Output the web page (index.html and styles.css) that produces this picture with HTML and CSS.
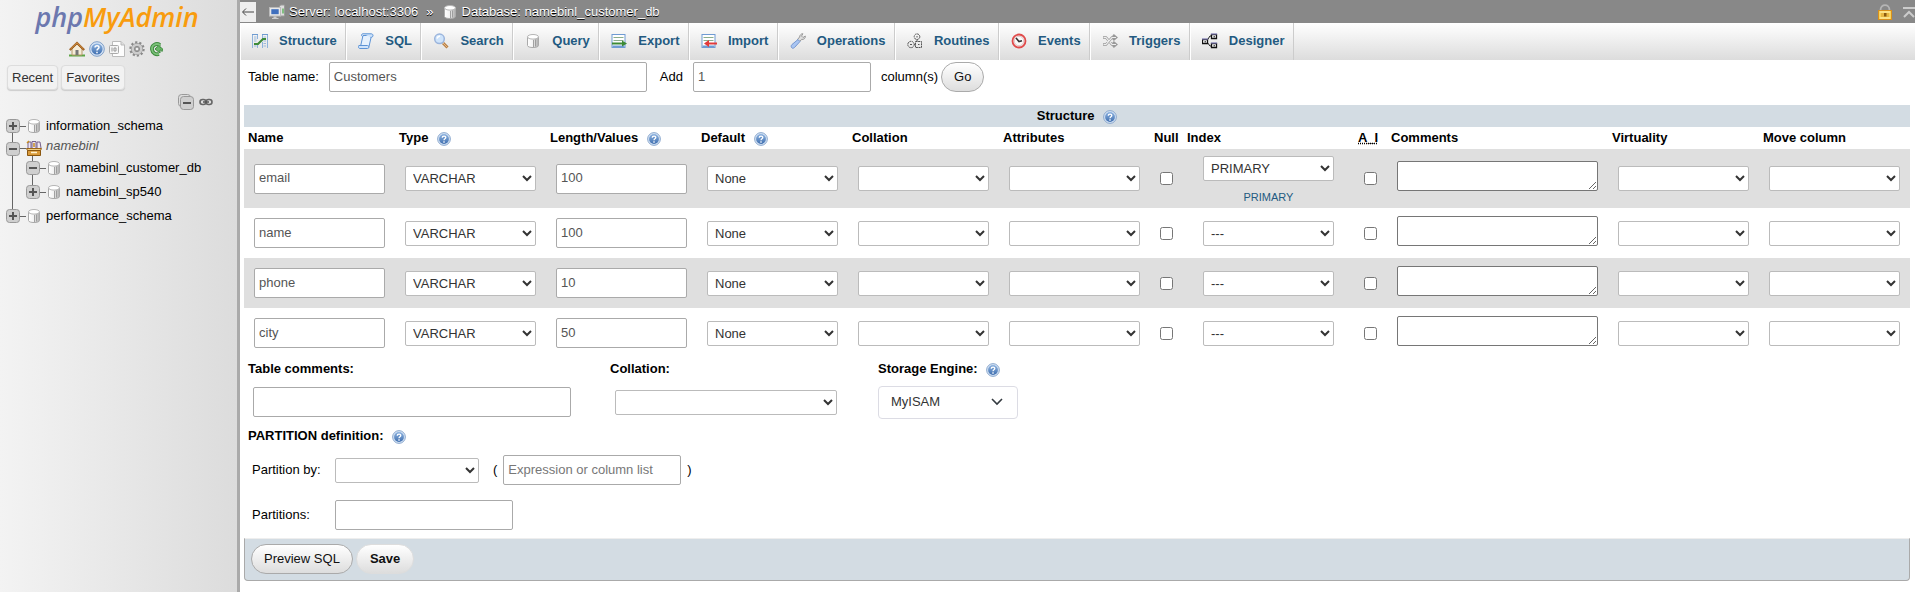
FILE: index.html
```html
<!DOCTYPE html>
<html lang="en">
<head>
<meta charset="utf-8">
<title>phpMyAdmin</title>
<link rel="stylesheet" href="styles.css">
</head>
<body>
<svg class="sprite" aria-hidden="true">
  <defs>
    <linearGradient id="gHelp" x1="0" y1="0" x2="0" y2="1"><stop offset="0" stop-color="#8fb4e0"/><stop offset="1" stop-color="#3f6fb0"/></linearGradient>
    <linearGradient id="gDb" x1="0" y1="0" x2="1" y2="0"><stop offset="0" stop-color="#fff"/><stop offset=".45" stop-color="#f4f4f4"/><stop offset="1" stop-color="#aaa"/></linearGradient>
  </defs>
  <symbol id="help" viewBox="0 0 16 16"><circle cx="8" cy="8" r="7.300" fill="#d6e4f5" stroke="#7f9fc8"/><circle cx="8" cy="8" r="5.600" fill="url(#gHelp)"/><path d="M6 6.600C6 4 10.200 4 10 6.500 9.900 7.900 8 7.800 8 9.500M8 10.700v1.500" fill="none" stroke="#fff" stroke-width="1.500"/></symbol>
  <symbol id="db" viewBox="0 0 16 16"><path d="M2.500 4v8.500c0 2.700 11 2.700 11 0V4" fill="url(#gDb)" stroke="#aaa"/><ellipse cx="8" cy="3.800" rx="5.500" ry="2.300" fill="#fff" stroke="#b5b5b5"/><path d="M10.500 6.500v7M8.500 7v7" stroke="#999" stroke-width=".9"/></symbol>
  <symbol id="plus" viewBox="0 0 14 14"><rect x=".5" y=".5" width="13" height="13" rx="3" fill="#cfcfcf" stroke="#999"/><path d="M3 7h8M7 3v8" stroke="#555" stroke-width="2"/></symbol>
  <symbol id="minus" viewBox="0 0 14 14"><rect x=".5" y=".5" width="13" height="13" rx="3" fill="#cfcfcf" stroke="#999"/><path d="M3 7h8" stroke="#555" stroke-width="2"/></symbol>
  <symbol id="home" viewBox="0 0 16 16"><path d="M0 14.500h16" stroke="#5da545" stroke-width="2"/><path d="M3 8l5-5 5 5v6H3z" fill="#f5ecd8" stroke="#b59a6a"/><path d="M6.500 9h3v5h-3z" fill="#777"/><path d="M.8 9L8 2l7.200 7" fill="none" stroke="#9b5a1c" stroke-width="2.200"/><path d="M1.500 8L8 1.800 14.500 8" fill="none" stroke="#e2a352" stroke-width=".8"/></symbol>
  <symbol id="doc" viewBox="0 0 16 16"><path d="M3.500.5h8.500l3.500 3.500v11.500h-12z" fill="#fdfdfd" stroke="#bbb"/><path d="M12 .5V4h3.500" fill="#ddd" stroke="#bbb"/><rect x=".5" y="4.500" width="9" height="8" rx="1" fill="#f5f5f5" stroke="#aaa"/><path d="M3 6.500v4M5 7h2v3H5z" fill="none" stroke="#999"/></symbol>
  <symbol id="gear" viewBox="0 0 16 16"><circle cx="8" cy="8" r="6.600" fill="none" stroke="#8a8a8a" stroke-width="2.200" stroke-dasharray="2.200 1.950"/><circle cx="8" cy="8" r="4" fill="none" stroke="#8a8a8a" stroke-width="4"/><circle cx="8" cy="8" r="4.200" fill="none" stroke="#ccc" stroke-width="2.600"/><circle cx="8" cy="8" r="2" fill="#eee" stroke="#888"/></symbol>
  <symbol id="reload" viewBox="0 0 16 16"><path d="M11 4C7 1.500 2.500 4.500 3 8.500c.5 4 4 5.300 7 4.500" fill="none" stroke="#3f8c3f" stroke-width="3.800"/><path d="M6 8l5-4.500V6.500c2.500 0 3 2 2 4 -.5-1.200-1-1.500-2-1.500v3z" fill="#6ab868" stroke="#3f8c3f"/><path d="M11 4C7 1.500 2.500 4.500 3 8.500c.5 4 4 5.300 7 4.500" fill="none" stroke="#7cc27a" stroke-width="1.800"/></symbol>
  <symbol id="collapse" viewBox="0 0 16 16"><rect x=".5" y=".5" width="12" height="12" rx="3" fill="#ddd" stroke="#999"/><rect x="2.500" y="2.500" width="13" height="13" rx="3" fill="#cfcfcf" stroke="#999"/><path d="M5 9h8" stroke="#555" stroke-width="2"/></symbol>
  <symbol id="chain" viewBox="0 0 14 8"><rect x="1" y="1.500" width="6" height="5" rx="2.500" fill="none" stroke="#666" stroke-width="1.600"/><rect x="7" y="1.500" width="6" height="5" rx="2.500" fill="none" stroke="#666" stroke-width="1.600"/><path d="M4 4h6" stroke="#555" stroke-width="1.500"/></symbol>
  <symbol id="group" viewBox="0 0 16 16"><path d="M2 8V2h3v6M6 8V1.500h4V8M11 8V2h3l1 6" fill="#efe6f2" stroke="#76618a"/><path d="M1 3l2-2M8 3v4" stroke="#c78f21" stroke-width="1.500"/><path d="M.5 8.500h15l-1 2h-13z" fill="#f0cf86" stroke="#9a6518"/><path d="M1.500 10.500h13v5h-13z" fill="#d99a3a" stroke="#8b5710"/><path d="M5 12.500h6" stroke="#fff1cf" stroke-width="1.500"/></symbol>
  <symbol id="server" viewBox="0 0 16 16"><path d="M10.500 2.500l1-1.500h4v11h-5z" fill="#ddd" stroke="#999"/><path d="M14 4.500v5" stroke="#4a4" stroke-width="1.200"/><rect x=".5" y="3.500" width="11" height="8.500" fill="#e8e8e8" stroke="#bbb"/><rect x="2.300" y="5.200" width="7.400" height="5" fill="#3f6fbd"/><path d="M4.500 12.500h3v1.500h2v1H3v-1h1.500z" fill="#ccc"/></symbol>
  <symbol id="structure" viewBox="0 0 16 16"><path d="M.5 1v14M5.500 1v5M10.500 1v5M15.500 1v14M5.500 11v4M10.500 9v6" stroke="#8fb3dc"/><path d="M0 1.500h6M10 1.500h6" stroke="#6e9bd0"/><path d="M2 4h2.500M2 6h2.500M2 8h2.500M2 13h2.500M11.500 4H14M11.500 8H14M11.500 10.500H14M11.500 13H14" stroke="#9cb9da"/><path d="M2 11h4l5-5h3" fill="none" stroke="#3e8b3a" stroke-width="2.200"/></symbol>
  <symbol id="sql" viewBox="0 0 16 16"><path d="M5 2.500h8.500L11 13.500H2.500z" fill="#e6f1fd" stroke="#5c93d6"/><path d="M5 .8h8c3 0 2.500 4-.5 3.500M5 .8C3 .8 3 3.500 5 3.500M1 12.500h8.500c2 0 2 3 0 3H2c-2 0-2-3-1-3z" fill="#cfe3fa" stroke="#5c93d6"/></symbol>
  <symbol id="search" viewBox="0 0 16 16"><path d="M10 10l4.500 4.500" stroke="#b98045" stroke-width="3"/><path d="M9.500 9.500l5 5" stroke="#e5b98a"/><circle cx="6.500" cy="5.800" r="4.800" fill="#cfe4fb" stroke="#9ab4dc" stroke-width="1.500"/><path d="M4 5.500Q4.500 3.500 7 3" fill="none" stroke="#fff" stroke-width="1.500"/></symbol>
  <symbol id="export" viewBox="0 0 16 16"><rect x="1" y="1.500" width="13" height="13" fill="#fff" stroke="#6f9bd3"/><path d="M2.500 4.500h10M2.500 7.500h10" stroke="#8cae8c"/><path d="M1.500 13.500h12" stroke="#6f9bd3" stroke-width="2"/><path d="M1 10.500h11" stroke="#3d8a36" stroke-width="2"/><path d="M11 7.500l5 3-5 3z" fill="#3d8a36"/></symbol>
  <symbol id="import" viewBox="0 0 16 16"><rect x="1" y="1.500" width="13" height="13" fill="#fff" stroke="#6f9bd3"/><path d="M2.500 4.500h10M2.500 7.500h10" stroke="#8cae8c"/><path d="M1.500 13.500h12" stroke="#6f9bd3" stroke-width="2"/><path d="M6 10.500h10" stroke="#e23b3b" stroke-width="2"/><path d="M8 7l-5 3.500L8 14z" fill="#e23b3b"/></symbol>
  <symbol id="ops" viewBox="0 0 16 16"><path d="M10 2.500C11 1 12 .5 13 .8L11.500 3l1.500 1.500L15.300 3c.4 2-1.300 3.800-3.500 3.400L9.500 8.500l-2-2L9.600 4z" fill="#ddd" stroke="#999"/><path d="M8 6.500l2 2-5.500 6c-1 1-2.500 1-3 0s-.5-2 .5-3z" fill="#a9c5f2" stroke="#7697cf"/></symbol>
  <symbol id="routines" viewBox="0 0 16 16" fill="none" stroke="#555"><circle cx="10" cy="3.700" r="2.800" stroke-dasharray="2 .6"/><circle cx="4" cy="11.500" r="3.200" stroke-dasharray="2 .6"/><rect x="8.500" y="8.500" width="6" height="6" stroke-dasharray="2 .6"/><path d="M10 3v1.500M3 11.500h2M11 11.500h1.500M10 6.300v2M7.200 11.500h1.300"/></symbol>
  <symbol id="events" viewBox="0 0 16 16"><circle cx="8" cy="8" r="6.500" fill="#f3e7e7" stroke="#e04b4b" stroke-width="1.800"/><circle cx="8" cy="8" r="4.700" fill="#fafafa" stroke="#d5b8b8" stroke-width=".7"/><path d="M5 5l3 3.500 3-.8" fill="none" stroke="#333" stroke-width="1.600"/></symbol>
  <symbol id="triggers" viewBox="0 0 16 16" fill="none"><path d="M1 4.500h3l6 7h3M1 11.500h3l6-7h3M11 2l3 2.500-3 2.500M11 9l3 2.500-3 2.500" stroke="#999" stroke-width="2.600"/><path d="M1.500 4.500H4l6 7h4M1.500 11.500H4l6-7h4" stroke="#eee" stroke-width="1.200"/></symbol>
  <symbol id="designer" viewBox="0 0 16 16"><path d="M5 7.500l3-4.500h2M5 9l3 4h2" fill="none" stroke="#222"/><path d="M.5 6.500h5v4h-5zM9.500 1.500h5v4h-5zM9.500 10.500h5v4h-5z" fill="#fff" stroke="#111" stroke-width="1.300"/><path d="M0 6h6M9 1h6M9 10h6" stroke="#9a96d8"/><path d="M2.500 8.800h1.500M11.500 3.800h1.500M11.500 12.800h1.500" stroke="#111"/></symbol>
  <symbol id="lock" viewBox="0 0 16 16"><path d="M3.500 6c0-6.500 9-6.500 9 0" fill="none" stroke="#b5b5b5" stroke-width="1.800"/><rect x="1.500" y="6.500" width="13" height="9" fill="#f8d35c" stroke="#d9901b"/><path d="M3 8h10M3 14h10" stroke="#fff0b0"/><path d="M4 10h8M4 12h8" stroke="#d79a28"/><rect x="7" y="9" width="2.500" height="3.500" fill="#8a5a10"/></symbol>
  <symbol id="top" viewBox="0 0 12 12"><path d="M0 2h12" stroke="#ccc" stroke-width="2"/><path d="M1 11l5-5 5 5" fill="none" stroke="#ccc" stroke-width="2"/></symbol>
</svg>

<div class="app">
  <aside class="sidebar">
    <a class="logo" href="#"><span class="logo-php">php</span><span class="logo-admin">MyAdmin</span></a>
    <nav class="quick" aria-label="Navigation links">
      <a href="#" aria-label="Home"><svg class="icon"><use href="#home"/></svg></a>
      <a href="#" aria-label="Documentation"><svg class="icon"><use href="#help"/></svg></a>
      <a href="#" aria-label="MySQL documentation"><svg class="icon"><use href="#doc"/></svg></a>
      <a href="#" aria-label="Panel settings"><svg class="icon"><use href="#gear"/></svg></a>
      <a href="#" aria-label="Reload"><svg class="icon"><use href="#reload"/></svg></a>
    </nav>
    <div class="recent"><button type="button">Recent</button><button type="button">Favorites</button></div>
    <div class="tree-tools">
      <a href="#" aria-label="Collapse all"><svg class="icon"><use href="#collapse"/></svg></a>
      <a href="#" aria-label="Unlink from main panel"><svg class="icon-chain"><use href="#chain"/></svg></a>
    </div>
    <ul class="tree">
      <li><div class="node"><svg class="toggle"><use href="#plus"/></svg><span class="stub"></span><svg class="icon"><use href="#db"/></svg><a href="#">information_schema</a></div></li>
      <li>
        <div class="node node-group"><svg class="toggle"><use href="#minus"/></svg><span class="stub"></span><svg class="icon"><use href="#group"/></svg><a href="#">namebinl</a></div>
        <ul class="subtree">
          <li class="node"><svg class="toggle"><use href="#minus"/></svg><span class="stub"></span><svg class="icon"><use href="#db"/></svg><a href="#">namebinl_customer_db</a></li>
          <li class="node"><svg class="toggle"><use href="#plus"/></svg><span class="stub"></span><svg class="icon"><use href="#db"/></svg><a href="#">namebinl_sp540</a></li>
        </ul>
      </li>
      <li><div class="node"><svg class="toggle"><use href="#plus"/></svg><span class="stub"></span><svg class="icon"><use href="#db"/></svg><a href="#">performance_schema</a></div></li>
    </ul>
  </aside>

  <main class="main">
    <header class="crumbs">
      <button class="hide-nav" type="button" aria-label="Hide panel"><svg viewBox="0 0 14 10"><path d="M13 5H2M5 1.500L1.500 5 5 8.500" fill="none" stroke="#444"/></svg></button>
      <svg class="icon"><use href="#server"/></svg>
      <a href="#">Server: localhost:3306</a>
      <span class="sep">»</span>
      <svg class="icon"><use href="#db"/></svg>
      <a href="#">Database: namebinl_customer_db</a>
      <span class="crumb-tools"><svg class="icon"><use href="#lock"/></svg><svg class="icon-top"><use href="#top"/></svg></span>
    </header>
    <nav class="tabs" aria-label="Database">
      <div class="tab-list">
        <a href="#"><svg class="icon"><use href="#structure"/></svg>Structure</a>
        <a href="#"><svg class="icon"><use href="#sql"/></svg>SQL</a>
        <a href="#"><svg class="icon"><use href="#search"/></svg>Search</a>
        <a href="#"><svg class="icon"><use href="#db"/></svg>Query</a>
        <a href="#"><svg class="icon"><use href="#export"/></svg>Export</a>
        <a href="#"><svg class="icon"><use href="#import"/></svg>Import</a>
        <a href="#"><svg class="icon"><use href="#ops"/></svg>Operations</a>
        <a href="#"><svg class="icon"><use href="#routines"/></svg>Routines</a>
        <a href="#"><svg class="icon"><use href="#events"/></svg>Events</a>
        <a href="#"><svg class="icon"><use href="#triggers"/></svg>Triggers</a>
        <a href="#"><svg class="icon"><use href="#designer"/></svg>Designer</a>
      </div>
    </nav>

    <form class="content">
      <div class="table-head">
        <label for="tname">Table name:</label>
        <input class="field field-wide" id="tname" type="text" value="Customers">
        <label class="add" for="ncols">Add</label>
        <input class="field field-mid" id="ncols" type="text" value="1">
        <span>column(s)</span>
        <button class="btn btn-go" type="button">Go</button>
      </div>

      <table class="columns">
        <caption>Structure <svg class="icon-help"><use href="#help"/></svg></caption>
        <colgroup>
          <col class="c-std"><col class="c-std"><col class="c-std"><col class="c-std"><col class="c-std"><col class="c-std"><col class="c-check"><col class="c-index"><col class="c-check"><col class="c-comments"><col class="c-std"><col class="c-std">
        </colgroup>
        <thead>
          <tr>
            <th>Name</th>
            <th>Type <svg class="icon-help"><use href="#help"/></svg></th>
            <th>Length/Values <svg class="icon-help"><use href="#help"/></svg></th>
            <th>Default <svg class="icon-help"><use href="#help"/></svg></th>
            <th>Collation</th>
            <th>Attributes</th>
            <th>Null</th>
            <th>Index</th>
            <th><abbr title="AUTO_INCREMENT">A_I</abbr></th>
            <th>Comments</th>
            <th>Virtuality</th>
            <th>Move column</th>
          </tr>
        </thead>
        <tbody>
          <tr class="has-key">
            <td><input class="field" type="text" value="email" aria-label="Name"></td>
            <td><select aria-label="Type"><option>VARCHAR</option></select></td>
            <td><input class="field" type="text" value="100" aria-label="Length"></td>
            <td><select aria-label="Default"><option>None</option></select></td>
            <td><select aria-label="Collation"><option></option></select></td>
            <td><select aria-label="Attributes"><option></option></select></td>
            <td><input type="checkbox" aria-label="Null"></td>
            <td class="index"><select aria-label="Index"><option>PRIMARY</option></select><a class="key-link" href="#">PRIMARY</a></td>
            <td><input type="checkbox" aria-label="Auto increment"></td>
            <td class="comments"><textarea rows="1" aria-label="Comments"></textarea></td>
            <td><select aria-label="Virtuality"><option></option></select></td>
            <td><select aria-label="Move column"><option></option></select></td>
          </tr>
          <tr>
            <td><input class="field" type="text" value="name" aria-label="Name"></td>
            <td><select aria-label="Type"><option>VARCHAR</option></select></td>
            <td><input class="field" type="text" value="100" aria-label="Length"></td>
            <td><select aria-label="Default"><option>None</option></select></td>
            <td><select aria-label="Collation"><option></option></select></td>
            <td><select aria-label="Attributes"><option></option></select></td>
            <td><input type="checkbox" aria-label="Null"></td>
            <td class="index"><select aria-label="Index"><option>---</option></select></td>
            <td><input type="checkbox" aria-label="Auto increment"></td>
            <td class="comments"><textarea rows="1" aria-label="Comments"></textarea></td>
            <td><select aria-label="Virtuality"><option></option></select></td>
            <td><select aria-label="Move column"><option></option></select></td>
          </tr>
          <tr>
            <td><input class="field" type="text" value="phone" aria-label="Name"></td>
            <td><select aria-label="Type"><option>VARCHAR</option></select></td>
            <td><input class="field" type="text" value="10" aria-label="Length"></td>
            <td><select aria-label="Default"><option>None</option></select></td>
            <td><select aria-label="Collation"><option></option></select></td>
            <td><select aria-label="Attributes"><option></option></select></td>
            <td><input type="checkbox" aria-label="Null"></td>
            <td class="index"><select aria-label="Index"><option>---</option></select></td>
            <td><input type="checkbox" aria-label="Auto increment"></td>
            <td class="comments"><textarea rows="1" aria-label="Comments"></textarea></td>
            <td><select aria-label="Virtuality"><option></option></select></td>
            <td><select aria-label="Move column"><option></option></select></td>
          </tr>
          <tr>
            <td><input class="field" type="text" value="city" aria-label="Name"></td>
            <td><select aria-label="Type"><option>VARCHAR</option></select></td>
            <td><input class="field" type="text" value="50" aria-label="Length"></td>
            <td><select aria-label="Default"><option>None</option></select></td>
            <td><select aria-label="Collation"><option></option></select></td>
            <td><select aria-label="Attributes"><option></option></select></td>
            <td><input type="checkbox" aria-label="Null"></td>
            <td class="index"><select aria-label="Index"><option>---</option></select></td>
            <td><input type="checkbox" aria-label="Auto increment"></td>
            <td class="comments"><textarea rows="1" aria-label="Comments"></textarea></td>
            <td><select aria-label="Virtuality"><option></option></select></td>
            <td><select aria-label="Move column"><option></option></select></td>
          </tr>
        </tbody>
      </table>

      <div class="options">
        <div class="option">
          <label for="tcomments">Table comments:</label>
          <div class="option-control"><input class="field field-wide" id="tcomments" type="text"></div>
        </div>
        <div class="option">
          <label for="tcoll">Collation:</label>
          <div class="option-control"><select class="coll" id="tcoll"><option></option></select></div>
        </div>
        <div class="option option-engine">
          <label for="engine">Storage Engine: <svg class="icon-help"><use href="#help"/></svg></label>
          <div class="option-control"><select class="engine" id="engine"><option>MyISAM</option></select></div>
        </div>
      </div>

      <fieldset class="partition">
        <legend>PARTITION definition: <svg class="icon-help"><use href="#help"/></svg></legend>
        <div class="partition-grid">
          <label for="pby">Partition by:</label>
          <div class="partition-by">
            <select id="pby"><option></option></select>
            <span class="paren-open">(</span>
            <input class="field field-mid" type="text" placeholder="Expression or column list" aria-label="Expression or column list">
            <span>)</span>
          </div>
          <label for="pcount">Partitions:</label>
          <div><input class="field field-mid" id="pcount" type="text"></div>
        </div>
      </fieldset>

      <footer class="actions">
        <button class="btn" type="button">Preview SQL</button>
        <button class="btn btn-primary" type="button">Save</button>
      </footer>
    </form>
  </main>
</div>
</body>
</html>
```
FILE: styles.css
```css
* { box-sizing: border-box; }

body {
  margin: 0;
  background: #fff;
  color: #000;
  font: 13px/16px "Liberation Sans", Arial, sans-serif;
}

a { color: #235a81; text-decoration: none; }
button, input, select, textarea { font: inherit; }

.sprite { position: absolute; width: 0; height: 0; }
.icon { width: 16px; height: 16px; flex: none; display: block; }
.icon-help { width: 14px; height: 14px; margin-left: 5px; vertical-align: -4px; }

.app { display: flex; min-height: 100vh; }

/* Navigation panel */
.sidebar {
  flex: none;
  width: 240px;
  border-right: 3px solid #aaa;
  background: linear-gradient(to right, #f3f3f3, #dcdcdc);
}
.logo {
  display: block;
  height: 41px;
  padding: 1px 3px 0 0;
  text-align: center;
  font: italic 600 27px/32px "Open Sans", sans-serif;
}
.logo-php { color: #6c78af; }
.logo-admin { color: #f89c0e; }
.quick { display: flex; justify-content: center; gap: 4px; padding-right: 4px; }
.recent { display: flex; gap: 3px; padding: 8px 7px 0; }
.recent button {
  height: 25px;
  padding: 0 4px;
  border: 1px solid #ddd;
  border-radius: 4px;
  background: #f2f2f2;
  color: #333;
  box-shadow: 0 1px 1px #ccc;
}
.tree-tools {
  display: flex;
  align-items: center;
  justify-content: flex-end;
  gap: 5px;
  padding: 4px 24px 4px 0;
}
.icon-chain { display: block; width: 14px; height: 8px; }
.tree, .subtree { margin: 0; padding: 0; list-style: none; }
.tree {
  padding-left: 6px;
  background: linear-gradient(#666, #666) no-repeat 12px 12px / 1px calc(100% - 24px);
}
.subtree {
  padding-left: 20px;
  background: linear-gradient(#666, #666) no-repeat 26px 0 / 1px calc(100% - 12px);
}
.node { display: flex; align-items: center; height: 24px; }
.node a { margin-left: 4px; color: #000; }
.node-group { height: 18px; align-items: flex-end; }
.node-group a { align-self: flex-start; color: #555; font-style: italic; }
.node-group .stub { margin-bottom: 7px; }
.toggle { width: 14px; height: 14px; flex: none; display: block; }
.stub { width: 6px; height: 1px; background: #666; }

/* Breadcrumb bar */
.main { flex: 1; min-width: 0; }
.crumbs {
  display: flex;
  align-items: center;
  gap: 4px;
  height: 23px;
  background: #888;
  color: #fff;
  text-shadow: 0 1px 0 #000;
}
.crumbs a { color: #fff; }
.hide-nav {
  width: 16px;
  height: 20px;
  margin-right: 9px;
  padding: 0 1px;
  border: 0;
  background: #eee;
}
.hide-nav svg { display: block; width: 14px; height: 10px; }
.sep { margin: 0 4px; }
.crumb-tools { display: flex; gap: 10px; align-items: center; margin-left: auto; }
.icon-top { width: 12px; height: 12px; }

/* Tab bar */
.tabs { background: linear-gradient(#fff, #dcdcdc); }
.tab-list { display: flex; max-width: 1054px; height: 37px; }
.tabs a {
  display: flex;
  flex: 1 1 auto;
  align-items: center;
  gap: 11px;
  padding: 0 8px 2px 11px;
  border-left: 1px solid #fff;
  border-right: 1px solid #ccc;
  font-weight: bold;
}

/* Form controls */
.content { padding: 0 5px 0 4px; }
.field {
  width: 100%;
  height: 30px;
  padding: 0 4px 2px;
  border: 1px solid #aaa;
  border-radius: 2px;
  background: #fff;
  color: #555;
}
.field::placeholder { color: #777; }
.field-wide { width: 318px; }
.field-mid { width: 178px; }
select {
  width: 100%;
  height: 25px;
  padding: 0 3px;
  border: 1px solid #bbb;
  border-radius: 2px;
  background: #fff;
  color: #333;
}
textarea {
  display: block;
  width: 100%;
  height: 30px;
  border: 1px solid #767676;
  border-radius: 2px;
}
input[type="checkbox"] { display: block; width: 13px; height: 13px; margin: 0; }
.btn {
  height: 30px;
  padding: 0 12px;
  border: 1px solid #aaa;
  border-radius: 15px;
  background: linear-gradient(#fff, #ddd);
  color: #111;
}
.btn-primary { padding: 0 13px; border-color: #ddd; font-weight: bold; }

.table-head { display: flex; align-items: center; padding: 2px 4px 13px; }
.table-head .field-wide { margin: 0 13px 0 10px; }
.table-head .field-mid { margin: 0 10px; }
.table-head .btn { margin-left: 3px; }

/* Column definitions */
.columns { width: 100%; table-layout: fixed; border-collapse: collapse; }
.columns caption {
  height: 22px;
  background: #d3dce3;
  font-weight: bold;
  line-height: 22px;
}
.c-std { width: 151px; }
.c-check { width: 33px; }
.c-index { width: 171px; }
.c-comments { width: 221px; }
.columns th {
  height: 22px;
  padding: 0 0 0 4px;
  text-align: left;
  line-height: 22px;
  white-space: nowrap;
}
.columns td { height: 50px; padding: 0 10px; }
.columns tbody tr:nth-child(odd) { background: #dfdfdf; }
.columns .index { padding: 0 20px; }
.columns .comments { padding-bottom: 5px; }
.columns .has-key td { height: 59px; }
.columns .has-key .index { padding-top: 4px; }
.key-link {
  display: block;
  margin-top: 8px;
  font-size: 11px;
  text-align: center;
}

/* Table options */
.options { display: flex; padding: 0 4px; }
.option { width: 362px; }
.option + .option { width: 268px; }
.option label { display: block; height: 20px; line-height: 22px; font-weight: bold; }
.option-control { display: flex; align-items: center; height: 48px; padding-left: 5px; }
.option-engine .option-control { padding-left: 0; }
.coll { width: 222px; }
.engine {
  width: 140px;
  height: 33px;
  padding: 0 12px;
  border-color: #dcdce4;
  border-radius: 4px;
  appearance: none;
  background: #fff url("data:image/svg+xml,%3Csvg xmlns='http://www.w3.org/2000/svg' viewBox='0 0 12 12'%3E%3Cpath d='M1 3l5 5 5-5' fill='none' stroke='%23343a40' stroke-width='1.600'/%3E%3C/svg%3E") no-repeat right 14px center / 12px 12px;
}

/* Partitioning */
.partition { margin: 0; padding: 0 8px; border: 0; }
.partition legend { margin-left: -4px; padding: 0; line-height: 20px; font-weight: bold; }
.partition-grid {
  display: grid;
  grid-template-columns: 83px 1fr;
  row-gap: 15px;
  align-items: center;
  padding: 9px 0 8px;
}
.partition-by { display: flex; align-items: center; gap: 6px; }
.partition-by select { width: 144px; }
.paren-open { margin-left: 8px; }

/* Footer */
.actions {
  display: flex;
  gap: 3px;
  padding: 5px 6px 6px;
  border: 1px solid #aaa;
  border-top-color: #eee;
  border-radius: 0 0 4px 4px;
  background: #d3dce3;
}
```
